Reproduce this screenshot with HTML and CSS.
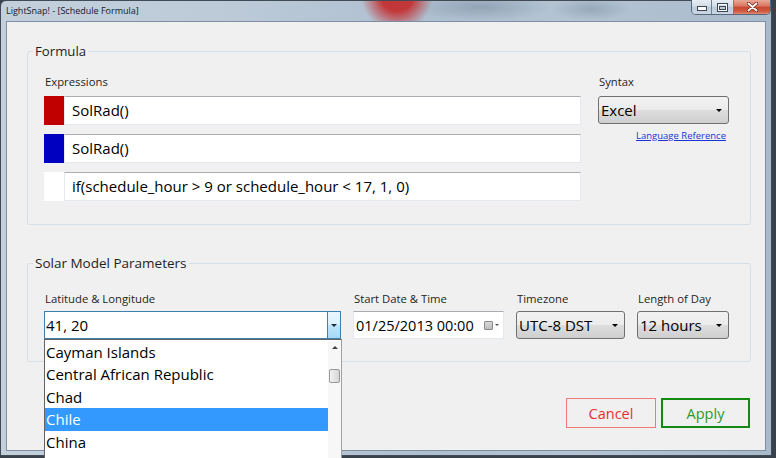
FILE: index.html
```html
<!DOCTYPE html>
<html lang="en">
<head>
    <meta charset="UTF-8">
    <title>LightSnap! - [Schedule Formula]</title>
    <link rel="stylesheet" href="styles.css">
</head>
<body>
    <div class="window">
        <div class="titlebar">
            <span class="title">LightSnap! - [Schedule Formula]</span>
            <div class="caption">
                <span class="cap min">
                    <svg width="10" height="5" viewBox="0 0 10 5"><rect x="0.5" y="0.5" width="9" height="4" fill="#fff" stroke="#3b4654"/></svg>
                </span>
                <span class="cap max">
                    <svg width="11" height="9" viewBox="0 0 11 9"><rect x="0.5" y="0.5" width="10" height="8" fill="none" stroke="#3b4654"/><rect x="1.5" y="1.5" width="8" height="6" fill="none" stroke="#fff"/><rect x="2.5" y="3.5" width="6" height="3" fill="none" stroke="#3b4654"/></svg>
                </span>
                <span class="cap close">
                    <svg width="11" height="10" viewBox="0 0 11 10"><path d="M1.5 1.5 L9.5 8.5 M9.5 1.5 L1.5 8.5" stroke="#6b2a1e" stroke-width="3.4" stroke-linecap="round"/><path d="M1.5 1.5 L9.5 8.5 M9.5 1.5 L1.5 8.5" stroke="#fff" stroke-width="1.8" stroke-linecap="round"/></svg>
                </span>
            </div>
        </div>

        <div class="client">
            <fieldset class="group formula">
                <legend>Formula</legend>
                <div class="formula-body">
                    <div class="expr">
                        <div class="lbl">Expressions</div>
                        <div class="expr-row"><span class="swatch red"></span><div class="textbox">SolRad()</div></div>
                        <div class="expr-row"><span class="swatch blue"></span><div class="textbox">SolRad()</div></div>
                        <div class="expr-row"><span class="swatch white"></span><div class="textbox">if(schedule_hour &gt; 9 or schedule_hour &lt; 17, 1, 0)</div></div>
                    </div>
                    <div class="syntax">
                        <div class="lbl">Syntax</div>
                        <div class="select">Excel<span class="arrow"></span></div>
                        <a class="link" href="#">Language Reference</a>
                    </div>
                </div>
            </fieldset>

            <fieldset class="group solar">
                <legend>Solar Model Parameters</legend>
                <div class="solar-row">
                    <div class="field f-latlng">
                        <div class="lbl">Latitude &amp; Longitude</div>
                        <div class="combo">
                            <span class="combo-text">41, 20</span>
                            <span class="combo-btn"><span class="arrow"></span></span>
                            <div class="popup">
                                <div class="items">
                                    <div class="item">Cayman Islands</div>
                                    <div class="item">Central African Republic</div>
                                    <div class="item">Chad</div>
                                    <div class="item sel">Chile</div>
                                    <div class="item">China</div>
                                </div>
                                <div class="scroll">
                                    <span class="up"></span>
                                    <span class="thumb"></span>
                                </div>
                            </div>
                        </div>
                    </div>
                    <div class="field f-date">
                        <div class="lbl">Start Date &amp; Time</div>
                        <div class="datebox">
                            <span>01/25/2013 00:00</span>
                            <span class="cal"><span class="cal-icon"></span><span class="arrow small"></span></span>
                        </div>
                    </div>
                    <div class="field f-tz">
                        <div class="lbl">Timezone</div>
                        <div class="select">UTC-8 DST<span class="arrow"></span></div>
                    </div>
                    <div class="field f-len">
                        <div class="lbl">Length of Day</div>
                        <div class="select">12 hours<span class="arrow"></span></div>
                    </div>
                </div>
            </fieldset>

            <div class="actions">
                <button class="btn cancel">Cancel</button>
                <button class="btn apply">Apply</button>
            </div>
        </div>
    </div>
</body>
</html>
```

FILE: styles.css
```css
*,*::before,*::after{
    box-sizing: border-box;
}

body{
    margin: 0;
    width: 776px;
    height: 458px;
    overflow: hidden;
    background: #39414b;
    font-family: "Open Sans", "Noto Sans", sans-serif;
    color: #1e1e1e;
}

/* window frame */
.window{
    width: 772px;
    height: 456px;
    display: flex;
    flex-direction: column;
    padding: 0 5px 4px 5px;
    border: 1px solid #414b56;
    border-radius: 6px 6px 0 0;
    background:
        radial-gradient(circle 36px at 396px -6px, rgba(196,40,40,0.9) 45%, rgba(196,40,40,0) 100%),
        radial-gradient(ellipse 70px 14px at 480px 6px, rgba(110,130,150,0.45), rgba(110,130,150,0) 100%),
        radial-gradient(ellipse 40px 12px at 590px 8px, rgba(110,130,150,0.4), rgba(110,130,150,0) 100%),
        linear-gradient(to right, #c3d0dc, #bccad8 30%, #aebfd0 55%, #b4c4d3 75%, #a9bacb);
}

.titlebar{
    height: 20px;
    display: flex;
    justify-content: space-between;
    align-items: flex-start;
}

.title{
    font-size: 9px;
    line-height: 20px;
    color: #14181d;
}

.caption{
    display: flex;
    height: 15px;
    margin: -1px -5px 0 0;
    border: 1px solid #56687a;
    border-top: none;
    border-radius: 0 0 5px 5px;
    overflow: hidden;
}

.cap{
    display: flex;
    justify-content: center;
    align-items: center;
    height: 100%;
    background: linear-gradient(#e6edf4, #d3dde7 45%, #bccbd9 50%, #cbd7e3);
}

.cap.min{
    width: 20px;
    align-items: flex-end;
    padding-bottom: 3px;
    border-right: 1px solid #6f8193;
}

.cap.max{
    width: 22px;
    border-right: 1px solid #6f8193;
}

.cap.close{
    width: 36px;
    background: linear-gradient(#e9a997, #d8735d 45%, #c6472f 50%, #cf5840 80%, #e28a70);
}

/* client area */
.client{
    flex: 1;
    background: #f0f0f0;
    border: 1px solid #7d8fa0;
    padding: 20px 14px 0 20px;
}

.group{
    margin: 0;
    min-width: 0;
    padding: 0 21px 23px 16px;
    border: 1px solid #d5dfe5;
    border-radius: 3px;
}

.group legend{
    font-size: 13.2px;
    line-height: 19px;
    padding: 0 2px;
    margin-left: -11px;
    color: #1e1e1e;
}

.solar legend{
    font-size: 13.5px;
}

.lbl{
    font-size: 11.3px;
    line-height: 16px;
    margin-bottom: 6px;
    padding-left: 1px;
    white-space: nowrap;
}

.formula-body{
    display: flex;
    gap: 17px;
    padding-top: 13px;
}

.expr{
    width: 537px;
}

.expr-row{
    display: flex;
    height: 29px;
    margin-bottom: 9px;
}

.expr-row:last-child{
    margin-bottom: 0;
}

.swatch{
    width: 20px;
}
.swatch.red{ background: #c00000; }
.swatch.blue{ background: #0000c0; }
.swatch.white{ background: #ffffff; }

.textbox{
    flex: 1;
    background: #fff;
    border: 1px solid #e3e9ef;
    border-top-color: #abadb3;
    padding-left: 7px;
    font-size: 15px;
    line-height: 27px;
    white-space: nowrap;
    color: #000;
}

.syntax{
    width: 131px;
}

.select{
    height: 28px;
    display: flex;
    align-items: center;
    justify-content: space-between;
    padding: 0 6px 0 2px;
    border: 1px solid #707070;
    border-radius: 3px;
    background: linear-gradient(#f2f2f2, #ebebeb 50%, #dddddd 50%, #cfcfcf);
    font-size: 15px;
    color: #000;
    white-space: nowrap;
}

.arrow{
    width: 0;
    height: 0;
    border-left: 3px solid transparent;
    border-right: 3px solid transparent;
    border-top: 3px solid #000;
}

.arrow.small{
    border-left-width: 2px;
    border-right-width: 2px;
    border-top: 2px solid #555;
}

.link{
    display: block;
    margin-top: 5px;
    padding-right: 3px;
    text-align: right;
    font-size: 9.5px;
    color: #1a33d6;
    text-decoration: underline;
}

/* solar parameters */
.solar{
    margin-top: 29px;
    padding-bottom: 22px;
}

.solar .lbl{
    margin-bottom: 4px;
    padding-top: 18px;
}

.solar-row{
    display: flex;
    gap: 12px;
}

.f-latlng{ width: 297px; }
.f-date{ width: 151px; }
.f-tz{ width: 109px; }
.f-len{ width: 92px; }

.combo{
    position: relative;
    height: 28px;
    display: flex;
    background: #fff;
    border: 1px solid #3c7fb1;
}

.combo-text{
    flex: 1;
    padding-left: 1px;
    font-size: 15px;
    line-height: 26px;
    color: #000;
}

.combo-btn{
    width: 13px;
    display: flex;
    justify-content: center;
    align-items: center;
    border-left: 1px solid #3c7fb1;
    background: linear-gradient(#eaf6fd, #d9f0fc 50%, #bee6fd 50%, #a7d9f5);
}

.combo-btn .arrow{
    border-top-color: #1c2b38;
}

.popup{
    position: absolute;
    top: 27px;
    left: -1px;
    width: 298px;
    height: 132px;
    display: flex;
    padding-top: 1px;
    background: #fff;
    border: 1px solid #646464;
    border-right-color: #a0a0a0;
    z-index: 5;
}

.items{
    flex: 1;
    overflow: hidden;
}

.item{
    height: 22.4px;
    line-height: 22px;
    padding-left: 1px;
    font-size: 15px;
    color: #000;
    white-space: nowrap;
}

.item.sel{
    background: #3399ff;
    color: #fff;
}

.scroll{
    width: 13px;
    display: flex;
    flex-direction: column;
    align-items: center;
    background: #f7f7f7;
}

.scroll .up{
    margin-top: 5px;
    width: 0;
    height: 0;
    border-left: 3px solid transparent;
    border-right: 3px solid transparent;
    border-bottom: 3px solid #404040;
}

.scroll .thumb{
    margin-top: 20px;
    width: 11px;
    height: 14px;
    border: 1px solid #979797;
    border-radius: 2px;
    background: linear-gradient(to right, #f4f4f4, #e4e4e4 50%, #d6d6d6);
}

.datebox{
    height: 28px;
    display: flex;
    align-items: center;
    justify-content: space-between;
    padding: 0 4px 0 2px;
    background: #fff;
    border: 1px solid #e3e9ef;
    border-top-color: #abadb3;
    font-size: 14.5px;
    color: #000;
    white-space: nowrap;
}

.cal{
    display: flex;
    align-items: center;
    gap: 2px;
}

.cal-icon{
    width: 9px;
    height: 9px;
    border: 1px solid #8a8a8a;
    border-radius: 1px;
    background: linear-gradient(#d8d8d8, #bdbdbd);
}

/* buttons */
.actions{
    display: flex;
    justify-content: flex-end;
    gap: 5px;
    margin-top: 36px;
    padding-right: 1px;
}

.btn{
    height: 30px;
    background: #f0f0f0;
    font-family: "Open Sans", "Noto Sans", sans-serif;
    font-size: 14.5px;
    padding: 0;
}

.btn.cancel{
    width: 90px;
    border: 1px solid #f07a7a;
    color: #ec2d2d;
}

.btn.apply{
    width: 89px;
    border: 2px solid #128a12;
    color: #2a9c2a;
}
```
